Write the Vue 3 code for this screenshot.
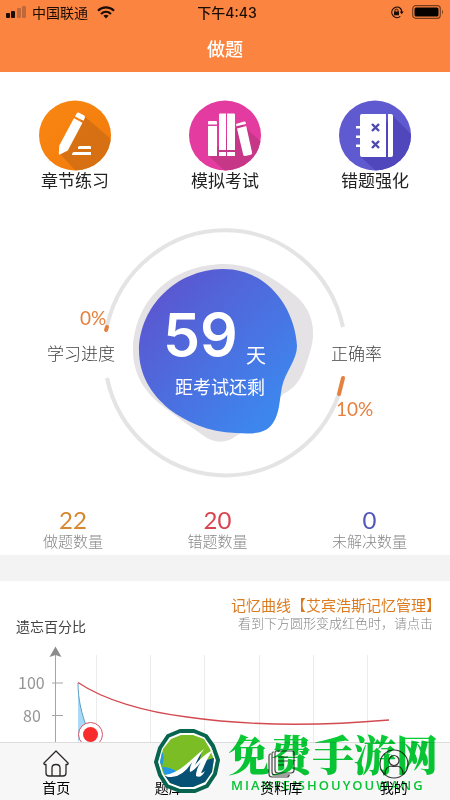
<script setup>
import { ref } from 'vue'

const stats = [
  { value: 22, label: '做题数量', tone: 'amber' },
  { value: 20, label: '错题数量', tone: 'red' },
  { value: 0, label: '未解决数量', tone: 'indigo' },
]
const gridLines = [96, 150, 204, 259, 313, 367]
const activeTab = ref('首页')
</script>

<template>
  <div class="page">
    <header class="top">
      <div class="status">
        <div class="status-left">
          <svg class="signal" width="21" height="12" viewBox="0 0 21 12">
            <rect x="0" y="7" width="4" height="5" rx="1" fill="#1b0d05" />
            <rect x="5" y="5" width="4" height="7" rx="1" fill="#1b0d05" />
            <rect x="11" y="2" width="4" height="10" rx="1" fill="#c0683a" />
            <rect x="16" y="0" width="4" height="12" rx="1" fill="#c0683a" />
          </svg>
          <span>中国联通</span>
          <svg class="wifi" width="18" height="13" viewBox="0 0 18 13" fill="none" stroke="#1b0d05" stroke-width="2.2">
            <path d="M1 4.8 C5.4 .3 12.6 .3 17 4.8" />
            <path d="M4 8 C7 5.2 11 5.2 14 8" />
            <path d="M6.4 9.8 Q9 7.9 11.6 9.8 L9 12.6 Z" fill="#1b0d05" stroke="none" />
          </svg>
        </div>
        <div class="clock">下午4:43</div>
        <div class="status-right">
          <svg width="14" height="13" viewBox="0 0 14 13">
            <path d="M10.5 2.5 A5.2 5.2 0 1 0 10.3 10.4 M11.7 6.4 A5.2 5.2 0 0 0 10.5 2.5" fill="none" stroke="#1b0d05" stroke-width="1.2" />
            <path d="M9.7 5.6 H13.7 L11.7 8.3 Z M4 5.6 H9 V9.3 H4 Z" fill="#1b0d05" />
            <path d="M5 5.8 V4.6 A1.5 1.5 0 0 1 8 4.6 V5.8" fill="none" stroke="#1b0d05" />
          </svg>
          <svg width="32" height="14" viewBox="0 0 32 14">
            <rect x=".7" y=".7" width="27.6" height="12.6" rx="3" fill="none" stroke="#7a3d1c" stroke-width="1.2" />
            <rect x="2.5" y="2.5" width="24" height="9" rx="1.5" fill="#050200" />
            <path d="M30 4.6 Q32 7 30 9.4 Z" fill="#7a3d1c" />
          </svg>
        </div>
      </div>
      <h1>做题</h1>
    </header>

    <main class="content">
      <nav class="menu">
        <button type="button">
          <svg width="72" height="71" viewBox="0 0 72 71">
            <defs>
              <linearGradient id="og" x1="0" x2="1" y1="0" y2="1"><stop offset="0" stop-color="#fb8712" /><stop offset="1" stop-color="#ef7a0b" /></linearGradient>
              <clipPath id="c1"><ellipse cx="36" cy="35.5" rx="36" ry="35" /></clipPath>
            </defs>
            <g clip-path="url(#c1)">
              <rect width="72" height="71" fill="url(#og)" />
              <path d="M45 16 L72 39 V71 H37 L21 54 Z" fill="#cf6d14" opacity=".8" />
            </g>
            <path d="M37.5 13.7 Q38.3 12 40 12.7 L45.2 15.5 Q46.5 16.5 45.8 18 L44.5 20.7 L36 16.5 Z M34.9 18.3 L43.5 22.8 L28.8 50.5 L21 54.5 Q19.7 54.8 19.8 53.2 L20.3 45.5 Z" fill="#fff" />
            <path d="M40.5 46 H51 Q52 46 52 47 V49 H39 V47.5 Q39 46 40.5 46 Z M35 52 H52 V55 H33 V54 Q33.5 52 35 52 Z" fill="#fff" />
          </svg>
          <span>章节练习</span>
        </button>
        <button type="button">
          <svg width="72" height="71" viewBox="0 0 72 71">
            <defs><clipPath id="c2"><ellipse cx="36" cy="35.5" rx="36" ry="35" /></clipPath></defs>
            <g clip-path="url(#c2)">
              <rect width="72" height="71" fill="#e33b9f" />
              <path d="M52 23 L72 42 V71 H36 L20 56 Z" fill="#c73788" />
            </g>
            <g fill="#fff">
              <path d="M20 21 H27 Q28 21 28 22 V24.500 H19 V22 Q19 21 20 21 Z M19 26 H28 V56 H20 Q19 56 19 55 Z" />
              <path d="M31 13.500 H37 V50 H30 V14.500 Q30 13.500 31 13.500 Z M30 52 H37 V56 H30 Z" />
              <path d="M38 13.500 H45 Q46 13.500 46 14.500 V50 H38 Z M38 52 H46 V56 H38 Z" />
              <path d="M47 24 L55 21.500 Q56.400 21.200 56.700 22.500 L57 24 L47.500 26.300 Z M48 28.500 L57.200 26 L63.200 53 Q63.200 54.300 62 54.700 L56 56 Q54.600 56.200 54.300 55 Z" />
            </g>
          </svg>
          <span>模拟考试</span>
        </button>
        <button type="button">
          <svg width="72" height="71" viewBox="0 0 72 71">
            <defs><clipPath id="c3"><ellipse cx="36" cy="35.5" rx="36" ry="35" /></clipPath></defs>
            <g clip-path="url(#c3)">
              <rect width="72" height="71" fill="#5f5ad0" />
              <path d="M53 15 L72 34 V71 H37 L21 56 Z" fill="#5047bd" />
            </g>
            <g fill="#fff">
              <path d="M23 14 H47 V57 H23 Q21 57 21 55 V47 H17 V44.500 H21 V38 H17 V35.500 H21 V28.500 H17 V26 H21 V16 Q21 14 23 14 Z" />
              <path d="M49 14 H52 Q54 14 54 16 V55 Q54 57 52 57 H49 Z" />
            </g>
            <path d="M33 24 L40 31 M40 24 L33 31 M33 41 L40 48 M40 41 L33 48" stroke="#4d49ae" stroke-width="2.400" />
          </svg>
          <span>错题强化</span>
        </button>
      </nav>

      <svg class="dial" viewBox="0 220 450 270" role="img" aria-label="距考试还剩59天">
        <defs>
          <linearGradient id="blob" x1="0.1" y1="0.1" x2="0.85" y2="0.85">
            <stop offset="0" stop-color="#5c55cf" />
            <stop offset="1" stop-color="#3d86ee" />
          </linearGradient>
        </defs>
        <g fill="none" stroke="#e4e4e4" stroke-width="4">
          <path d="M107 326 A121 123.500 0 0 1 343 327" />
          <path d="M107 378 A121 123.500 0 0 0 339 394" />
        </g>
        <path d="M107 327 L106 330" stroke="#e5813f" stroke-width="4" stroke-linecap="round" />
        <path d="M343 378 L339 394" stroke="#e5813f" stroke-width="4" stroke-linecap="round" />
        <path d="M225 264 C252 264 275 278 296 296 C312 310 317 330 310 352 C304 372 300 386 283 394 C270 410 240 435 236 436 C226 444 214 443 204 436 C188 425 180 419 168 410 C148 396 133 378 133 350 C134 300 172 264 225 264 Z" fill="#e4e2e4" />
        <path d="M222 269 C266 268 295 307 297 346 C297 360 285 372 282 387 C279 402 280 412 273 423 C266 434 253 434 236 433 C208 432 186 422 169 409 C150 393 139 374 139 350 C140 306 176 270 222 269 Z" fill="url(#blob)" />
        <text class="days" x="163" y="356">59</text>
        <text class="unit" x="246" y="363">天</text>
        <text class="left" x="175" y="394">距考试还剩</text>
        <text class="percent" x="80" y="325">0%</text>
        <text class="caption" x="47" y="360">学习进度</text>
        <text class="caption" x="331" y="360">正确率</text>
        <text class="percent" x="336" y="416">10%</text>
      </svg>

      <dl class="stats">
        <div v-for="s in stats" :key="s.label" :class="s.tone">
          <dd>{{ s.value }}</dd>
          <dt>{{ s.label }}</dt>
        </div>
      </dl>

      <section class="memory">
        <div class="memory-head">
          <h2>遗忘百分比</h2>
          <div class="memory-note">
            <p class="note-title">记忆曲线【艾宾浩斯记忆管理】</p>
            <p class="note-sub">看到下方圆形变成红色时，请点击</p>
          </div>
        </div>
        <svg class="chart" viewBox="0 636 450 164" role="img" aria-label="记忆曲线">
          <g fill="#ececec">
            <rect v-for="x in gridLines" :key="x" :x="x" y="655" width="1" height="145" />
          </g>
          <path d="M55.500 652 V800 M52 683 H63 M52 715.500 H63" stroke="#a5a5a5" fill="none" />
          <path d="M55.500 646.500 L61.500 657 L55.500 655 L49.500 657 Z" fill="#8c8c8c" />
          <text class="axis" x="18" y="689">100</text>
          <text class="axis" x="23" y="722">80</text>
          <path d="M78 683 C78 700 82 715 87 728 L78 742 Z" fill="#a9daf5" />
          <path d="M78 683 C78 700 82 715 87 728" fill="none" stroke="#5d9fc8" />
          <path d="M78 682.500 C104 700 145 712 187 717 C250 726 320 726 389 720" fill="none" stroke="#d24a50" stroke-width="1.300" />
          <circle cx="90.500" cy="734.500" r="12" fill="#fff" stroke="#d8536b" />
          <circle cx="90.500" cy="734.500" r="7.500" fill="#f82c2c" />
        </svg>
      </section>
    </main>

    <nav class="tabs">
      <button type="button" :aria-pressed="activeTab === '首页'" @click="activeTab = '首页'">
        <svg width="30" height="30" viewBox="0 0 30 30" fill="none" stroke="#2c2727" stroke-width="1.300" stroke-linejoin="round" stroke-linecap="round">
          <path d="M5 15.500 H3.500 Q2.500 15 3 14 L15 2 L27 14 Q27.500 15 26.500 15.500 H25 M5 15.500 V24 Q5 27 8 27 H22 Q25 27 25 24 V15.500 M11 27 V19 Q11 15.500 15 15.500 Q19 15.500 19 19 V27" />
        </svg>
        <span>首页</span>
      </button>
      <button type="button" :aria-pressed="activeTab === '题库'" @click="activeTab = '题库'">
        <svg width="30" height="30" viewBox="0 0 30 30" fill="none" stroke="#2c2727" stroke-width="1.300">
          <rect x="5" y="3" width="20" height="24" rx="3" />
          <path d="M10 10 H20 M10 15 H20 M10 20 H16" />
        </svg>
        <span>题库</span>
      </button>
      <button type="button" :aria-pressed="activeTab === '资料库'" @click="activeTab = '资料库'">
        <svg width="30" height="30" viewBox="0 0 30 30" fill="none" stroke="#4a4646" stroke-width="1.200">
          <path d="M11 2 H26 Q28 2 28 4 V21 Q28 24 25 24 H12 Q9 24 9 21 V4 Q9 2 11 2 Z M8 3 H7 Q6 3 6 5 V23 Q6 26 9 26 H24 M5 5 H4 Q3 5 3 7 V25 Q3 28 6 28 H21 Q23 28 23 26 M12 8 H22 M12 12 H22 M12 16 H18" />
        </svg>
        <span>资料库</span>
      </button>
      <button type="button" :aria-pressed="activeTab === '我的'" @click="activeTab = '我的'">
        <svg width="30" height="30" viewBox="0 0 30 30" fill="none" stroke="#3a3636" stroke-width="1.200">
          <circle cx="15" cy="15" r="14" />
          <circle cx="15" cy="11.500" r="5" />
          <path d="M6 25 Q6 18 12 17 Q15 18 18 17 Q24 18 24 25" />
        </svg>
        <span>我的</span>
      </button>
    </nav>

    <div class="brand">
      <svg class="brand-logo" width="66" height="66" viewBox="0 0 66 66">
        <path d="M26 2 L40 2 L52 7 L59 17 L64 31 L61 45 L53 57 L41 62 L26 62 L13 57 L6 46 L2 33 L6 19 L14 7 Z" fill="#fff" stroke="#07644f" stroke-width="4" stroke-linejoin="round" />
        <path d="M27 6 L39 6 L50 10 L56 20 L60 31 L58 43 L51 53 L39 58 L27 58 L16 54 L9 44 L6 33 L9 20 L17 10 Z" fill="#7bbd24" />
        <path d="M60 29 L58 43 L51 53 L39 58 L27 58 L16 54 L11 47 Q22 47 30 39 L48 22 L45 33 Z" fill="#075174" />
        <path d="M6 33 L8 23 Q11 26 8 38 Q16 38 22 42 Q17 47 11 46 Z" fill="#2298e6" />
        <path d="M11 46 Q22 44 30 37 C38 31 43 25 50 20 C46 26 43 31 41 36 Q49 26 59 21 C53 29 50 38 47 44 Q49 44 51 42 Q47 50 42 47 Q42 40 47 33 Q40 42 36 43 Q35 38 39 32 Q28 49 16 48 Q12 48 11 46 Z" fill="#fff" />
      </svg>
      <div class="brand-text">
        <strong>免费手游网</strong>
        <span>MIANFEISHOUYOUWANG</span>
      </div>
    </div>
  </div>
</template>

<style>
body {
  margin: 0;
  background: #fff;
}
</style>

<style scoped>
.page {
  position: relative;
  display: flex;
  flex-direction: column;
  height: 100vh;
  overflow: hidden;
  background: #fff;
  color: #222;
  font-family: "Noto Sans CJK SC", sans-serif;
}
button {
  border: 0;
  padding: 0;
  background: none;
  color: inherit;
  font-family: inherit;
  cursor: pointer;
}
svg {
  display: block;
  flex: none;
}
h1, h2, p, dl, dd {
  margin: 0;
}
.top {
  flex: none;
  background: #fb8540;
}
.status {
  display: grid;
  grid-template-columns: 1fr auto 1fr;
  align-items: center;
  height: 24px;
  padding: 0 6px;
  color: #1b0d05;
  font-size: 14px;
}
.status-left,
.status-right {
  display: flex;
  align-items: center;
}
.status-left {
  gap: 5px;
}
.wifi {
  margin-left: 4px;
}
.clock {
  padding-left: 4px;
  font-family: Inter, "Noto Sans CJK SC", sans-serif;
  font-weight: 500;
}
.status-right {
  justify-content: flex-end;
  gap: 8px;
}
h1 {
  color: #fff;
  font-size: 18px;
  font-weight: 500;
  line-height: 48px;
  text-align: center;
}
.content {
  flex: 1;
  min-height: 0;
  overflow: hidden;
}
.menu {
  display: grid;
  grid-template-columns: repeat(3, 1fr);
  padding: 28px 0 31px;
}
.menu button {
  display: flex;
  flex-direction: column;
  align-items: center;
  font-size: 17px;
  line-height: 18px;
}
.dial {
  width: 100%;
}
.days {
  fill: #fff;
  font: 600 59px Inter, sans-serif;
}
.unit {
  fill: #fff;
  font-size: 20px;
}
.left {
  fill: #fff;
  font-size: 18px;
}
.caption {
  fill: #444;
  font-size: 17px;
  font-weight: 300;
}
.percent {
  fill: #e5813f;
  font-family: Lato, sans-serif;
  font-size: 19px;
}
.stats {
  display: flex;
  justify-content: space-between;
  padding: 19px 43px 4px;
  text-align: center;
}
.stats > div {
  display: flex;
  flex-direction: column;
}
dd {
  font-family: Lato, sans-serif;
  font-size: 24px;
  line-height: 22px;
}
dt {
  color: #888;
  font-size: 15px;
  font-weight: 300;
  line-height: 20px;
}
.amber dd {
  color: #d8862f;
}
.red dd {
  color: #d9434f;
}
.indigo dd {
  color: #5058bd;
}
.memory {
  border-top: 26px solid #f3f3f3;
}
.memory-head {
  display: flex;
  justify-content: space-between;
  align-items: flex-end;
  padding: 15px 9px 0 16px;
}
h2 {
  color: #444;
  font-size: 14px;
  font-weight: 400;
  line-height: 20px;
}
.memory-note {
  padding-bottom: 4px;
  text-align: right;
  line-height: 18px;
}
.note-title {
  color: #dc7a1e;
  font-size: 15px;
}
.note-sub {
  padding-right: 8px;
  color: #888;
  font-size: 13px;
  font-weight: 300;
}
.chart {
  width: 100%;
}
.axis {
  fill: #949494;
  font-size: 16px;
}
.tabs {
  display: grid;
  flex: none;
  grid-template-columns: repeat(4, 1fr);
  border-top: 1px solid #dcdcdc;
  background: #f7f7f7;
}
.tabs button {
  display: flex;
  flex-direction: column;
  align-items: center;
  padding: 6px 0 5px;
  color: #000;
  font-size: 14px;
  line-height: 16px;
}
.brand {
  position: absolute;
  right: 12px;
  bottom: 5px;
  display: flex;
  align-items: center;
  gap: 8px;
  pointer-events: none;
}
.brand-text {
  display: flex;
  flex-direction: column;
  color: #08cb35;
  mix-blend-mode: multiply;
}
.brand-text strong {
  font-family: "Noto Serif CJK SC", "Noto Sans CJK SC", serif;
  font-size: 42px;
  font-weight: 900;
  line-height: 46px;
}
.brand-text span {
  padding-left: 3px;
  font: 600 13px/18px "Open Sans", "Noto Sans", sans-serif;
  letter-spacing: 2px;
}
</style>
